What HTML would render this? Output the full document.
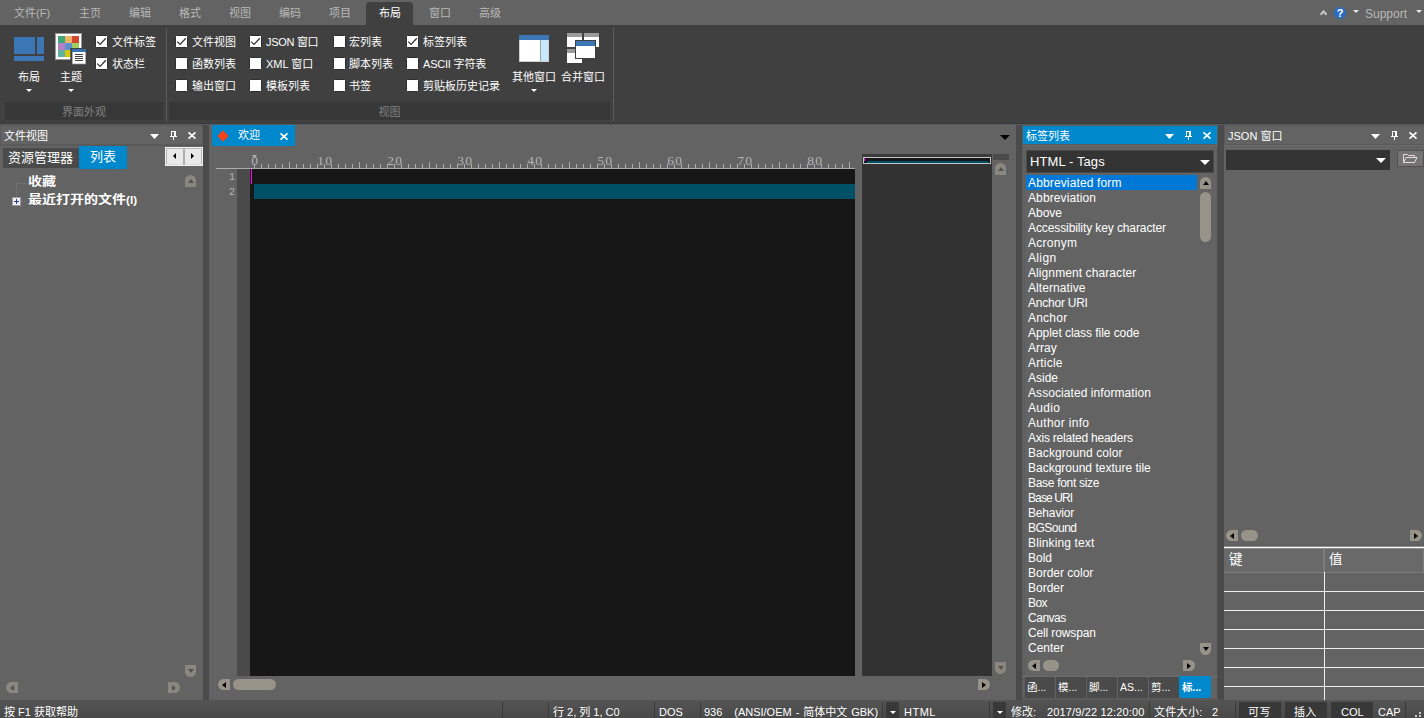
<!DOCTYPE html>
<html lang="zh-CN">
<head>
<meta charset="utf-8">
<title>UltraEdit</title>
<style>
*{box-sizing:border-box;margin:0;padding:0}
html,body{width:1424px;height:718px;overflow:hidden;background:#636363}
body{position:relative;font-family:"Liberation Sans","Noto Sans CJK SC",sans-serif;font-size:11px;color:#fff;line-height:1}
.a{position:absolute}
.t{position:absolute;white-space:nowrap;line-height:14px;height:14px}
/* top tab bar */
#tabbar{left:0;top:0;width:1424px;height:25px;background:#636363}
#tabbar .t{color:#b9b9b9;font-size:11px;top:6px}
#acttab{left:366px;top:2px;width:47px;height:23px;background:#404040;border-radius:4px 4px 0 0}
/* ribbon */
#ribbon{left:0;top:25px;width:1424px;height:98px;background:#404040}
.grp{background:#383838;height:18px;top:77px;color:#808080;text-align:center;line-height:20px;font-size:11px;overflow:hidden}
.vsep{width:1px;background:#5c5c5c;top:3px;height:93px}
.cb{width:13px;height:13px;background:#fff;border:1px solid #2e2e2e;border-radius:1.5px}
.cb svg{position:absolute;left:0;top:0}
.lbl{color:#fff;font-size:11px}
.tri{width:0;height:0;border-left:3px solid transparent;border-right:3px solid transparent;border-top:3px solid #fff}
/* strip under ribbon */
#strip{left:0;top:123px;width:1424px;height:2px;background:linear-gradient(#363b3e 50%,#575c5f 50%)}
/* panels */
.gap{background:#4a4a4a}
.hdr{height:18px;background:#636363;top:126px}
.hdr .t{top:3px;font-size:11px}

.pbtn{position:absolute;top:0;height:18px}
.sb{position:absolute;background:#979388;border-radius:3px}
.sbd{position:absolute;background:#898780;border-radius:3px}
.ar{position:absolute;width:0;height:0}
#tree .t{font-weight:bold;font-size:12px;line-height:16px;height:16px;transform:scaleX(1.167);transform-origin:0 50%}
#tags .t{font-size:12px;line-height:15px;height:15px;left:2px;margin-top:1px}
.btab{position:absolute;top:677px;height:21px;background:#4a4a4a;font-size:10.5px;line-height:21px;padding-left:2px;white-space:nowrap;overflow:hidden}
#status .t{top:5px;font-size:11px;line-height:14px}
.ssep{position:absolute;top:2px;width:1px;height:16px;background:#3a3a3a}
.sbox{position:absolute;top:2px;height:16px;background:#383838}
</style>
</head>
<body>
<!-- ===== TOP TAB BAR ===== -->
<div id="tabbar" class="a">
  <div id="acttab" class="a"></div>
  <div class="t" style="left:14px">文件(F)</div>
  <div class="t" style="left:79px">主页</div>
  <div class="t" style="left:129px">编辑</div>
  <div class="t" style="left:179px">格式</div>
  <div class="t" style="left:229px">视图</div>
  <div class="t" style="left:279px">编码</div>
  <div class="t" style="left:329px">项目</div>
  <div class="t" style="left:379px;color:#fff">布局</div>
  <div class="t" style="left:429px">窗口</div>
  <div class="t" style="left:479px">高级</div>
  <svg class="a" style="left:1316px;top:5px" width="108" height="16" viewBox="0 0 108 16">
    <path d="M4.6 9.7 L7.55 6.4 L10.5 9.7" fill="none" stroke="#c6c6c6" stroke-width="2.1"/>
    <circle cx="24.1" cy="8" r="6.1" fill="#2b6cc0"/>
    <text x="24.1" y="12" font-family="Liberation Sans, sans-serif" font-weight="bold" font-size="11" fill="#fff" text-anchor="middle">?</text>
    <path d="M37 5 h6 l-3 3 z" fill="#e8e8e8"/>
    <path d="M100 5 h6 l-3 3 z" fill="#e8e8e8"/>
  </svg>
  <div class="t" style="left:1365px;font-size:12px;top:7px">Support</div>
</div>
<!-- ===== RIBBON ===== -->
<div id="ribbon" class="a">

  <!-- layout icon -->
  <div class="a" style="left:14px;top:12px;width:21px;height:17px;background:#3d76b5"></div>
  <div class="a" style="left:37px;top:12px;width:7px;height:17px;background:#3d76b5"></div>
  <div class="a" style="left:14px;top:31px;width:30px;height:5px;background:#3d76b5"></div>
  <div class="t lbl" style="left:18px;top:45px">布局</div>
  <div class="a tri" style="left:26px;top:64px"></div>
  <!-- theme icon -->
  <svg class="a" style="left:55px;top:8px" width="32" height="32" viewBox="0 0 32 32">
    <rect x="0.5" y="0.5" width="26" height="26" fill="#fff" stroke="#9a9a9a" stroke-width="1"/>
    <rect x="3" y="3" width="7" height="7" fill="#3fa678"/><rect x="10" y="3" width="7" height="7" fill="#f0b265"/><rect x="17" y="3" width="7" height="7" fill="#d4482f"/>
    <rect x="3" y="10" width="7" height="7" fill="#b37fc7"/><rect x="10" y="10" width="7" height="7" fill="#5f8fd1"/><rect x="17" y="10" width="7" height="7" fill="#a3cd5c"/>
    <rect x="3" y="17" width="7" height="7" fill="#5fb3a2"/><rect x="10" y="17" width="7" height="7" fill="#d4c90f"/><rect x="17" y="17" width="7" height="7" fill="#e8e8e8"/>
    <rect x="15.3" y="15" width="16" height="17" fill="#404040"/>
    <rect x="17" y="16" width="14" height="15.3" fill="#9a9a9a"/>
    <rect x="17.8" y="19" width="12.4" height="11.6" fill="#fff"/>
    <rect x="17" y="16" width="14" height="3" fill="#3572b0"/>
    <rect x="20" y="21" width="8" height="1" fill="#444"/><rect x="20" y="23" width="8" height="1" fill="#444"/><rect x="20" y="25" width="8" height="1" fill="#444"/><rect x="20" y="27" width="8" height="1" fill="#444"/>
  </svg>
  <div class="t lbl" style="left:60px;top:45px">主题</div>
  <div class="a tri" style="left:68px;top:64px"></div>
<div class="a cb" style="left:95px;top:10px"><svg width="11" height="11" viewBox="0 0 11 11"><path d="M1.2 5.6 L4.1 8.4 L9.8 2.3" fill="none" stroke="#333" stroke-width="1.3"/></svg></div><div class="t lbl" style="left:112px;top:10px">文件标签</div>
<div class="a cb" style="left:95px;top:32px"><svg width="11" height="11" viewBox="0 0 11 11"><path d="M1.2 5.6 L4.1 8.4 L9.8 2.3" fill="none" stroke="#333" stroke-width="1.3"/></svg></div><div class="t lbl" style="left:112px;top:32px">状态栏</div>
<div class="a cb" style="left:175px;top:10px"><svg width="11" height="11" viewBox="0 0 11 11"><path d="M1.2 5.6 L4.1 8.4 L9.8 2.3" fill="none" stroke="#333" stroke-width="1.3"/></svg></div><div class="t lbl" style="left:192px;top:10px">文件视图</div>
<div class="a cb" style="left:175px;top:32px"></div><div class="t lbl" style="left:192px;top:32px">函数列表</div>
<div class="a cb" style="left:175px;top:54px"></div><div class="t lbl" style="left:192px;top:54px">输出窗口</div>
<div class="a cb" style="left:249px;top:10px"><svg width="11" height="11" viewBox="0 0 11 11"><path d="M1.2 5.6 L4.1 8.4 L9.8 2.3" fill="none" stroke="#333" stroke-width="1.3"/></svg></div><div class="t lbl" style="left:266px;top:10px;letter-spacing:-.3px">JSON 窗口</div>
<div class="a cb" style="left:249px;top:32px"></div><div class="t lbl" style="left:266px;top:32px">XML 窗口</div>
<div class="a cb" style="left:249px;top:54px"></div><div class="t lbl" style="left:266px;top:54px">模板列表</div>
<div class="a cb" style="left:333px;top:10px"></div><div class="t lbl" style="left:349px;top:10px">宏列表</div>
<div class="a cb" style="left:333px;top:32px"></div><div class="t lbl" style="left:349px;top:32px">脚本列表</div>
<div class="a cb" style="left:333px;top:54px"></div><div class="t lbl" style="left:349px;top:54px">书签</div>
<div class="a cb" style="left:406px;top:10px"><svg width="11" height="11" viewBox="0 0 11 11"><path d="M1.2 5.6 L4.1 8.4 L9.8 2.3" fill="none" stroke="#333" stroke-width="1.3"/></svg></div><div class="t lbl" style="left:423px;top:10px">标签列表</div>
<div class="a cb" style="left:406px;top:32px"></div><div class="t lbl" style="left:423px;top:32px;letter-spacing:-.2px">ASCII 字符表</div>
<div class="a cb" style="left:406px;top:54px"></div><div class="t lbl" style="left:423px;top:54px">剪贴板历史记录</div>

  <!-- other windows icon -->
  <svg class="a" style="left:519px;top:10px" width="30" height="27" viewBox="0 0 30 27">
    <rect x="0" y="0" width="30" height="27" fill="#d0d0d0"/>
    <rect x="0" y="0" width="30" height="5" fill="#3d76b5"/>
    <rect x="1" y="5" width="20" height="21" fill="#fff"/>
    <rect x="21" y="5" width="1" height="21" fill="#a0a0a0"/>
    <rect x="22" y="5" width="7" height="21" fill="#c8e8fb"/>
  </svg>
  <div class="t lbl" style="left:512px;top:45px">其他窗口</div>
  <div class="a tri" style="left:531px;top:64px"></div>
  <!-- merge windows icon -->
  <svg class="a" style="left:567px;top:8px" width="32" height="30" viewBox="0 0 32 30">
    <rect x="0" y="0" width="15" height="14" fill="#fff"/><rect x="0" y="0" width="15" height="4" fill="#9c9c9c"/>
    <rect x="17" y="0" width="15" height="14" fill="#fff"/><rect x="17" y="0" width="15" height="4" fill="#9c9c9c"/>
    <rect x="0" y="16" width="15" height="14" fill="#fff"/><rect x="0" y="16" width="15" height="4" fill="#9c9c9c"/>
    <rect x="8" y="7" width="21" height="19" fill="#404040"/>
    <rect x="9" y="8" width="19" height="17" fill="#fff"/>
    <rect x="9" y="8" width="19" height="5" fill="#3d76b5"/>
  </svg>
  <div class="t lbl" style="left:561px;top:45px">合并窗口</div>
  <div class="a grp" style="left:5px;width:158px">界面外观</div>
  <div class="a vsep" style="left:166px"></div>
  <div class="a grp" style="left:169px;width:441px">视图</div>
  <div class="a vsep" style="left:613px"></div>
</div>
<div id="strip" class="a"></div>
<!-- ===== MAIN ===== -->
<div id="main" class="a" style="left:0;top:125px;width:1424px;height:575px;background:#636363"></div>

<!-- ===== LEFT PANEL: file view ===== -->
<div class="a" style="left:0;top:125px;width:203px;height:21px;background:#5a5a5a"></div>
<div class="a hdr" style="left:1px;width:201px"><div class="t" style="left:3px">文件视图</div>
  <svg class="a" style="left:147px;top:1px" width="54" height="18" viewBox="0 0 54 18">
    <path d="M2 7 H11 L6.5 12 Z" fill="#fff"/>
    <path d="M23 4 h5 v5 h1 v1 h-3 v3 h-1 v-3 h-3 v-1 h1 z M24 5 v4 h2 v-4 z" fill="#fff" fill-rule="evenodd"/>
    <path d="M40.5 5.3 L47.5 11.7 M47.5 5.3 L40.5 11.7" fill="none" stroke="#fff" stroke-width="1.6"/>
  </svg>
</div>
<div class="a" style="left:3px;top:148px;width:76px;height:20px;background:#4a4a4a"></div>
<div class="t" style="left:8px;top:150px;font-size:13px;line-height:16px;height:16px">资源管理器</div>
<div class="a" style="left:79px;top:146px;width:48px;height:23px;background:#0088cc"></div>
<div class="t" style="left:90px;top:149px;font-size:13px;line-height:16px;height:16px">列表</div>
<!-- scroll buttons -->
<div class="a" style="left:165px;top:147px;width:38px;height:19px;background:#f3f3f3"></div><div class="a" style="left:166px;top:148px;width:36px;height:17px;background:#e9e9e9;border:1px solid #b6b6b6;border-bottom-color:#dcdcdc"></div><div class="a" style="left:183px;top:149px;width:2px;height:16px;background:#adadad"></div>

<div class="ar" style="left:172.5px;top:153.5px;border-top:3px solid transparent;border-bottom:3px solid transparent;border-right:3.5px solid #000;margin-top:-.5px"></div>
<div class="ar" style="left:191px;top:153.5px;border-top:3px solid transparent;border-bottom:3px solid transparent;border-left:3.5px solid #000;margin-top:-.5px"></div>
<!-- tree -->
<div id="tree" class="a" style="left:0;top:169px;width:203px;height:531px">
  <div class="t" style="left:28px;top:5px">收藏</div>
  <div class="t" style="left:28px;top:23px">最近打开的文件<span style="font-size:10px;position:relative;top:-.5px">(I)</span></div>
  <div class="a" style="left:12px;top:28px;width:9px;height:9px;background:#f0f0f0;border:1px solid #9a9a9a"></div>
  <div class="a" style="left:14px;top:32px;width:5px;height:1px;background:#223a8a"></div>
  <div class="a" style="left:16px;top:30px;width:1px;height:5px;background:#223a8a"></div>
  <div class="a" style="left:16px;top:14px;width:9px;height:0;border-top:1px dotted #7c7c7c"></div>
  <div class="a" style="left:16px;top:14px;width:0;height:14px;border-left:1px dotted #7c7c7c"></div>
  <div class="a" style="left:21px;top:32px;width:4px;height:0;border-top:1px dotted #7c7c7c"></div>
</div>
<!-- left panel scrollbars (disabled) -->
<div class="sbd" style="left:185px;top:175px;width:11px;height:12px;border-radius:5.5px 5.5px 0 0"></div>
<div class="ar" style="left:187.5px;top:178.5px;border-left:3px solid transparent;border-right:3px solid transparent;border-bottom:4.5px solid #55534f"></div>
<div class="sbd" style="left:185px;top:665px;width:11px;height:12px;border-radius:0 0 5.5px 5.5px"></div>
<div class="ar" style="left:187.5px;top:669px;border-left:3px solid transparent;border-right:3px solid transparent;border-top:4.5px solid #55534f"></div>
<div class="sbd" style="left:6px;top:682px;width:12px;height:11px;border-radius:5.5px 0 0 5.5px"></div>
<div class="ar" style="left:9.5px;top:684.5px;border-top:3px solid transparent;border-bottom:3px solid transparent;border-right:4.5px solid #55534f"></div>
<div class="sbd" style="left:168px;top:682px;width:12px;height:11px;border-radius:0 5.5px 5.5px 0"></div>
<div class="ar" style="left:172px;top:684.5px;border-top:3px solid transparent;border-bottom:3px solid transparent;border-left:4.5px solid #55534f"></div>

<!-- ===== EDITOR ===== -->
<div class="a" style="left:212px;top:125px;width:83px;height:21px;background:#0088cc;border-radius:1.5px 0 0 0"></div>
<div class="a" style="left:219.3px;top:131.6px;width:8px;height:8px;background:#f4421c;transform:rotate(45deg)"></div>
<div class="t" style="left:238px;top:128px;font-size:11px">欢迎</div>
<svg class="a" style="left:279px;top:131px" width="10" height="10" viewBox="0 0 10 10"><path d="M1.5 2.3 L8.5 8.6 M8.5 2.3 L1.5 8.6" stroke="#fff" stroke-width="1.6" fill="none"/></svg>
<div class="ar" style="left:1000px;top:135px;border-left:5px solid transparent;border-right:5px solid transparent;border-top:5px solid #000"></div>
<svg class="a" style="left:216px;top:146px" width="640" height="24" viewBox="0 0 640 24">
  <rect x="0" y="22" width="639" height="1" fill="#adadad"/>
  <g fill="#adadad"><rect x="38" y="18" width="1" height="5"/><rect x="45" y="18" width="1" height="5"/><rect x="52" y="18" width="1" height="5"/><rect x="59" y="18" width="1" height="5"/><rect x="66" y="18" width="1" height="5"/><rect x="73" y="16" width="1" height="7"/><rect x="80" y="18" width="1" height="5"/><rect x="87" y="18" width="1" height="5"/><rect x="94" y="18" width="1" height="5"/><rect x="101" y="18" width="1" height="5"/><rect x="108" y="18" width="1" height="5"/><rect x="115" y="18" width="1" height="5"/><rect x="122" y="18" width="1" height="5"/><rect x="129" y="18" width="1" height="5"/><rect x="136" y="18" width="1" height="5"/><rect x="143" y="16" width="1" height="7"/><rect x="150" y="18" width="1" height="5"/><rect x="157" y="18" width="1" height="5"/><rect x="164" y="18" width="1" height="5"/><rect x="171" y="18" width="1" height="5"/><rect x="178" y="18" width="1" height="5"/><rect x="185" y="18" width="1" height="5"/><rect x="192" y="18" width="1" height="5"/><rect x="199" y="18" width="1" height="5"/><rect x="206" y="18" width="1" height="5"/><rect x="213" y="16" width="1" height="7"/><rect x="220" y="18" width="1" height="5"/><rect x="227" y="18" width="1" height="5"/><rect x="234" y="18" width="1" height="5"/><rect x="241" y="18" width="1" height="5"/><rect x="248" y="18" width="1" height="5"/><rect x="255" y="18" width="1" height="5"/><rect x="262" y="18" width="1" height="5"/><rect x="269" y="18" width="1" height="5"/><rect x="276" y="18" width="1" height="5"/><rect x="283" y="16" width="1" height="7"/><rect x="290" y="18" width="1" height="5"/><rect x="297" y="18" width="1" height="5"/><rect x="304" y="18" width="1" height="5"/><rect x="311" y="18" width="1" height="5"/><rect x="318" y="18" width="1" height="5"/><rect x="325" y="18" width="1" height="5"/><rect x="332" y="18" width="1" height="5"/><rect x="339" y="18" width="1" height="5"/><rect x="346" y="18" width="1" height="5"/><rect x="353" y="16" width="1" height="7"/><rect x="360" y="18" width="1" height="5"/><rect x="367" y="18" width="1" height="5"/><rect x="374" y="18" width="1" height="5"/><rect x="381" y="18" width="1" height="5"/><rect x="388" y="18" width="1" height="5"/><rect x="395" y="18" width="1" height="5"/><rect x="402" y="18" width="1" height="5"/><rect x="409" y="18" width="1" height="5"/><rect x="416" y="18" width="1" height="5"/><rect x="423" y="16" width="1" height="7"/><rect x="430" y="18" width="1" height="5"/><rect x="437" y="18" width="1" height="5"/><rect x="444" y="18" width="1" height="5"/><rect x="451" y="18" width="1" height="5"/><rect x="458" y="18" width="1" height="5"/><rect x="465" y="18" width="1" height="5"/><rect x="472" y="18" width="1" height="5"/><rect x="479" y="18" width="1" height="5"/><rect x="486" y="18" width="1" height="5"/><rect x="493" y="16" width="1" height="7"/><rect x="500" y="18" width="1" height="5"/><rect x="507" y="18" width="1" height="5"/><rect x="514" y="18" width="1" height="5"/><rect x="521" y="18" width="1" height="5"/><rect x="528" y="18" width="1" height="5"/><rect x="535" y="18" width="1" height="5"/><rect x="542" y="18" width="1" height="5"/><rect x="549" y="18" width="1" height="5"/><rect x="556" y="18" width="1" height="5"/><rect x="563" y="16" width="1" height="7"/><rect x="570" y="18" width="1" height="5"/><rect x="577" y="18" width="1" height="5"/><rect x="584" y="18" width="1" height="5"/><rect x="591" y="18" width="1" height="5"/><rect x="598" y="18" width="1" height="5"/><rect x="605" y="18" width="1" height="5"/><rect x="612" y="18" width="1" height="5"/><rect x="619" y="18" width="1" height="5"/><rect x="626" y="18" width="1" height="5"/><rect x="633" y="16" width="1" height="7"/></g>
  <g fill="#b4b4b4" font-family="Liberation Serif, serif" font-size="13.5" text-anchor="middle" letter-spacing="1.1"><text x="39.2" y="19">0</text><text x="109.2" y="19">10</text><text x="179.2" y="19">20</text><text x="249.2" y="19">30</text><text x="319.2" y="19">40</text><text x="389.2" y="19">50</text><text x="459.2" y="19">60</text><text x="529.2" y="19">70</text><text x="599.2" y="19">80</text></g>
  <path d="M36 9 h5 l-2.5 3 z" fill="#b0b0b0"/>
</svg>
<div class="a" style="left:237px;top:169px;width:13px;height:507px;background:#4a4a4a"></div>
<div class="a" style="left:250px;top:169px;width:605px;height:507px;background:#171717"></div>
<div class="a" style="left:254px;top:184px;width:601px;height:15px;background:#005068"></div>
<div class="a" style="left:251px;top:169px;width:1px;height:15px;background:#ff00ff"></div>
<div class="t" style="left:216px;top:171px;width:19px;text-align:right;font-size:10px;color:#b4b4b4;font-family:'Liberation Mono',monospace">1</div>
<div class="t" style="left:216px;top:186px;width:19px;text-align:right;font-size:10px;color:#b4b4b4;font-family:'Liberation Mono',monospace">2</div>
<!-- minimap -->
<div class="a" style="left:862px;top:154px;width:130px;height:522px;background:#323232"></div>
<div class="a" style="left:862px;top:154px;width:130px;height:3px;background:#3b3b3b"></div>
<div class="a" style="left:863px;top:157px;width:128px;height:7px;background:#171717;border:1px solid #c4c4c4"></div>
<div class="a" style="left:867px;top:161px;width:121px;height:2px;background:#005068"></div>
<div class="a" style="left:864px;top:158px;width:1px;height:3px;background:#ff00ff"></div>
<div class="a" style="left:993px;top:154px;width:16px;height:6px;background:#4a4a4a"></div>
<!-- editor vscroll -->
<div class="sbd" style="left:995px;top:163px;width:11px;height:12px;border-radius:5.5px 5.5px 0 0"></div>
<div class="ar" style="left:997.5px;top:166.5px;border-left:3px solid transparent;border-right:3px solid transparent;border-bottom:4.5px solid #55534f"></div>
<div class="sbd" style="left:995px;top:662px;width:11px;height:12px;border-radius:0 0 5.5px 5.5px"></div>
<div class="ar" style="left:997.5px;top:666px;border-left:3px solid transparent;border-right:3px solid transparent;border-top:4.5px solid #55534f"></div>
<!-- editor hscroll -->
<div class="sb" style="left:218px;top:679px;width:12px;height:11px;border-radius:5.5px 0 0 5.5px"></div>
<div class="ar" style="left:222px;top:681.5px;border-top:3px solid transparent;border-bottom:3px solid transparent;border-right:4.5px solid #000"></div>
<div class="sb" style="left:233px;top:679px;width:43px;height:11px;border-radius:5.5px"></div>
<div class="sb" style="left:978px;top:679px;width:12px;height:11px;border-radius:0 5.5px 5.5px 0"></div>
<div class="ar" style="left:982px;top:681.5px;border-top:3px solid transparent;border-bottom:3px solid transparent;border-left:4.5px solid #000"></div>
<!-- gaps -->
<div class="a gap" style="left:203px;top:125px;width:6px;height:575px"></div>
<div class="a gap" style="left:1016px;top:125px;width:6px;height:575px"></div>
<div class="a gap" style="left:1217px;top:125px;width:7px;height:575px"></div>

<!-- ===== TAG LIST PANEL ===== -->
<div class="a" style="left:1022px;top:125px;width:196px;height:21px;background:#5a5a5a"></div><div class="a" style="left:1022px;top:145px;width:196px;height:1px;background:#696969"></div>
<div class="a hdr" style="left:1023px;width:194px;background:#0088cc"><div class="t" style="left:3px">标签列表</div>
  <svg class="a" style="left:140px;top:1px" width="54" height="18" viewBox="0 0 54 18"><path d="M2 7 H11 L6.5 12 Z" fill="#fff"/>
    <path d="M23 4 h5 v5 h1 v1 h-3 v3 h-1 v-3 h-3 v-1 h1 z M24 5 v4 h2 v-4 z" fill="#fff" fill-rule="evenodd"/>
    <path d="M40.5 5.3 L47.5 11.7 M47.5 5.3 L40.5 11.7" fill="none" stroke="#fff" stroke-width="1.6"/></svg>
</div>
<div class="a" style="left:1026px;top:150px;width:188px;height:23px;background:#333;border:1px solid #4a4a4a"></div>
<div class="t" style="left:1030px;top:154px;font-size:13px;line-height:16px;height:16px;letter-spacing:0.1px">HTML - Tags</div>
<div class="ar" style="left:1200px;top:160px;border-left:5px solid transparent;border-right:5px solid transparent;border-top:5px solid #fff"></div>
<div id="tags" class="a" style="left:1026px;top:175px;width:172px;height:480px">
  <div class="a" style="left:0;top:0;width:171px;height:15px;background:#0078d7"></div>
  <div class="t" style="top:0px;letter-spacing:0.14px">Abbreviated form</div><div class="t" style="top:15px;letter-spacing:0.12px">Abbreviation</div><div class="t" style="top:30px">Above</div><div class="t" style="top:45px;letter-spacing:-0.1px">Accessibility key character</div><div class="t" style="top:60px;letter-spacing:0.28px">Acronym</div><div class="t" style="top:75px;letter-spacing:0.35px">Align</div><div class="t" style="top:90px;letter-spacing:0.09px">Alignment character</div><div class="t" style="top:105px;letter-spacing:0.08px">Alternative</div><div class="t" style="top:120px;letter-spacing:-0.23px">Anchor URI</div><div class="t" style="top:135px;letter-spacing:0.22px">Anchor</div><div class="t" style="top:150px;letter-spacing:-0.06px">Applet class file code</div><div class="t" style="top:165px">Array</div><div class="t" style="top:180px;letter-spacing:0.18px">Article</div><div class="t" style="top:195px">Aside</div><div class="t" style="top:210px;letter-spacing:0.07px">Associated information</div><div class="t" style="top:225px;letter-spacing:0.28px">Audio</div><div class="t" style="top:240px;letter-spacing:0.29px">Author info</div><div class="t" style="top:255px;letter-spacing:-0.23px">Axis related headers</div><div class="t" style="top:270px;letter-spacing:0.07px">Background color</div><div class="t" style="top:285px">Background texture tile</div><div class="t" style="top:300px;letter-spacing:-0.31px">Base font size</div><div class="t" style="top:315px;letter-spacing:-0.9px">Base URI</div><div class="t" style="top:330px;letter-spacing:-0.16px">Behavior</div><div class="t" style="top:345px;letter-spacing:-0.5px">BGSound</div><div class="t" style="top:360px;letter-spacing:0.13px">Blinking text</div><div class="t" style="top:375px">Bold</div><div class="t" style="top:390px">Border color</div><div class="t" style="top:405px">Border</div><div class="t" style="top:420px;letter-spacing:-0.55px">Box</div><div class="t" style="top:435px;letter-spacing:-0.48px">Canvas</div><div class="t" style="top:450px;letter-spacing:-0.13px">Cell rowspan</div><div class="t" style="top:465px">Center</div>
</div>
<!-- tag vscroll -->
<div class="sb" style="left:1200px;top:177px;width:11px;height:12px;border-radius:5.5px 5.5px 0 0"></div>
<div class="ar" style="left:1202.5px;top:180.5px;border-left:3px solid transparent;border-right:3px solid transparent;border-bottom:4.5px solid #000"></div>
<div class="sb" style="left:1200px;top:192px;width:11px;height:50px;border-radius:5.5px"></div>
<div class="sb" style="left:1200px;top:643px;width:11px;height:12px;border-radius:0 0 5.5px 5.5px"></div>
<div class="ar" style="left:1202.5px;top:646.5px;border-left:3px solid transparent;border-right:3px solid transparent;border-top:4.5px solid #000"></div>
<!-- tag hscroll -->
<div class="sb" style="left:1028px;top:660px;width:12px;height:11px;border-radius:5.5px 0 0 5.5px"></div>
<div class="ar" style="left:1032px;top:662.5px;border-top:3px solid transparent;border-bottom:3px solid transparent;border-right:4.5px solid #000"></div>
<div class="sb" style="left:1043px;top:660px;width:16px;height:11px;border-radius:5.5px"></div>
<div class="sb" style="left:1183px;top:660px;width:12px;height:11px;border-radius:0 5.5px 5.5px 0"></div>
<div class="ar" style="left:1187px;top:662.5px;border-top:3px solid transparent;border-bottom:3px solid transparent;border-left:4.5px solid #000"></div>
<div class="a" style="left:1022px;top:146px;width:3px;height:552px;background:#5e5e5e"></div><div class="a" style="left:1022px;top:698px;width:196px;height:2px;background:#5a5a5a"></div><div class="a" style="left:1022px;top:676px;width:196px;height:1px;background:#6e6e6e"></div>
<!-- bottom tabs -->
<div class="btab" style="left:1025px;width:30px;padding-left:2px">函...</div>
<div class="btab" style="left:1056px;width:30px">模...</div>
<div class="btab" style="left:1087px;width:30px">脚...</div>
<div class="btab" style="left:1118px;width:30px">AS...</div>
<div class="btab" style="left:1149px;width:30px">剪...</div>
<div class="btab" style="left:1179px;width:32px;background:#0088cc;font-weight:bold;border-radius:0 0 3px 3px;height:22px;top:676px;line-height:22px;padding-left:3px">标...</div>
<!-- ===== JSON PANEL ===== -->
<div class="a" style="left:1224px;top:125px;width:200px;height:21px;background:#5a5a5a"></div><div class="a" style="left:1224px;top:145px;width:200px;height:1px;background:#696969"></div>
<div class="a hdr" style="left:1225px;width:199px"><div class="t" style="left:3px">JSON 窗口</div>
  <svg class="a" style="left:144px;top:1px" width="54" height="18" viewBox="0 0 54 18"><path d="M2 7 H11 L6.5 12 Z" fill="#fff"/>
    <path d="M23 4 h5 v5 h1 v1 h-3 v3 h-1 v-3 h-3 v-1 h1 z M24 5 v4 h2 v-4 z" fill="#fff" fill-rule="evenodd"/>
    <path d="M40.5 5.3 L47.5 11.7 M47.5 5.3 L40.5 11.7" fill="none" stroke="#fff" stroke-width="1.6"/></svg>
</div>
<div class="a" style="left:1226px;top:150px;width:164px;height:20px;background:#333"></div>
<div class="ar" style="left:1376px;top:158px;border-left:5px solid transparent;border-right:5px solid transparent;border-top:5px solid #fff"></div>
<div class="a" style="left:1397px;top:150px;width:27px;height:17px;background:#747474;border:1px solid #525252"></div>
<svg class="a" style="left:1402px;top:153px" width="16" height="11" viewBox="0 0 16 11"><path d="M1.5 9.5 V1.5 H5.5 L6.5 2.5 H12.5 V4.5 M1.5 9.5 L4 4.5 H15 L12.5 9.5 Z" fill="none" stroke="#e6d8e0" stroke-width="1"/></svg>
<!-- json hscroll -->
<div class="sb" style="left:1226px;top:530px;width:12px;height:11px;border-radius:5.5px 0 0 5.5px"></div>
<div class="ar" style="left:1230px;top:532.5px;border-top:3px solid transparent;border-bottom:3px solid transparent;border-right:4.5px solid #000"></div>
<div class="sb" style="left:1241px;top:530px;width:17px;height:11px;border-radius:5.5px"></div>
<div class="sb" style="left:1410px;top:530px;width:12px;height:11px;border-radius:0 5.5px 5.5px 0"></div>
<div class="ar" style="left:1414px;top:532.5px;border-top:3px solid transparent;border-bottom:3px solid transparent;border-left:4.5px solid #000"></div>
<!-- json table -->
<div class="a" style="left:1224px;top:544px;width:200px;height:2px;background:#5f5f5f"></div><div class="a" style="left:1224px;top:546px;width:200px;height:1px;background:#909090"></div><div class="a" style="left:1224px;top:547px;width:200px;height:1px;background:#fafafa"></div>
<div class="a" style="left:1224px;top:548px;width:100px;height:25px;background:#696969;border:1px solid #7c7c7c;border-left:0;border-top-color:#8e8e8e"></div>
<div class="a" style="left:1324px;top:548px;width:100px;height:25px;background:#696969;border:1px solid #7c7c7c;border-top-color:#8e8e8e"></div>
<div class="t" style="left:1229px;top:553px;font-size:13.5px">键</div>
<div class="t" style="left:1329px;top:553px;font-size:13.5px">值</div>
<div class="a" style="left:1324px;top:572px;width:1px;height:128px;background:#f0f0f0"></div>
<div class="a" style="left:1224px;top:591px;width:200px;height:1px;background:#f0f0f0"></div>
<div class="a" style="left:1224px;top:610px;width:200px;height:1px;background:#f0f0f0"></div>
<div class="a" style="left:1224px;top:629px;width:200px;height:1px;background:#f0f0f0"></div>
<div class="a" style="left:1224px;top:648px;width:200px;height:1px;background:#f0f0f0"></div>
<div class="a" style="left:1224px;top:667px;width:200px;height:1px;background:#f0f0f0"></div>
<div class="a" style="left:1224px;top:686px;width:200px;height:1px;background:#f0f0f0"></div>
<!-- ===== STATUS ===== -->
<div id="status" class="a" style="left:0;top:700px;width:1424px;height:18px;background:linear-gradient(#545454,#494949)">
  <div class="t" style="left:4px">按 F1 获取帮助</div>
  <div class="ssep" style="left:502px"></div>
  <div class="ssep" style="left:548px"></div>
  <div class="t" style="left:553px">行 2, 列 1, C0</div>
  <div class="ssep" style="left:654px"></div>
  <div class="t" style="left:659px">DOS</div>
  <div class="ssep" style="left:700px"></div>
  <div class="t" style="left:704px;word-spacing:.9px">936 &nbsp; (ANSI/OEM - 简体中文 GBK)</div>
  <div class="ssep" style="left:882px"></div>
  <div class="sbox" style="left:886px;width:13px"></div>
  <div class="ar" style="left:890px;top:11px;border-left:3px solid transparent;border-right:3px solid transparent;border-top:3px solid #fff"></div>
  <div class="t" style="left:904px;letter-spacing:.5px">HTML</div>
  <div class="ssep" style="left:989px"></div><div class="sbox" style="left:993px;width:13px"></div><div class="ar" style="left:997px;top:11px;border-left:3px solid transparent;border-right:3px solid transparent;border-top:3px solid #fff"></div>
  <div class="t" style="left:1011px">修改:</div>
  <div class="t" style="left:1047px;letter-spacing:.15px">2017/9/22 12:20:00</div>
  <div class="ssep" style="left:1149px"></div>
  <div class="t" style="left:1154px;letter-spacing:.3px">文件大小:</div>
  <div class="t" style="left:1212px">2</div>
  <div class="ssep" style="left:1235px"></div>
  <div class="sbox" style="left:1239px;width:42px"></div><div class="t" style="left:1248px;letter-spacing:.6px">可写</div>
  <div class="sbox" style="left:1285px;width:42px"></div><div class="t" style="left:1294px;letter-spacing:.3px">插入</div>
  <div class="sbox" style="left:1331px;width:42px"></div><div class="t" style="left:1341px">COL</div>
  <div class="t" style="left:1378px">CAP</div>
  <div class="ssep" style="left:1405px"></div>
  <div class="a" style="left:1419px;top:12px;width:2px;height:2px;background:#c8c8c8"></div>
  <div class="a" style="left:1415px;top:15px;width:2px;height:2px;background:#c8c8c8"></div>
  <div class="a" style="left:1419px;top:15px;width:2px;height:2px;background:#c8c8c8"></div>
</div>
</body>
</html>
